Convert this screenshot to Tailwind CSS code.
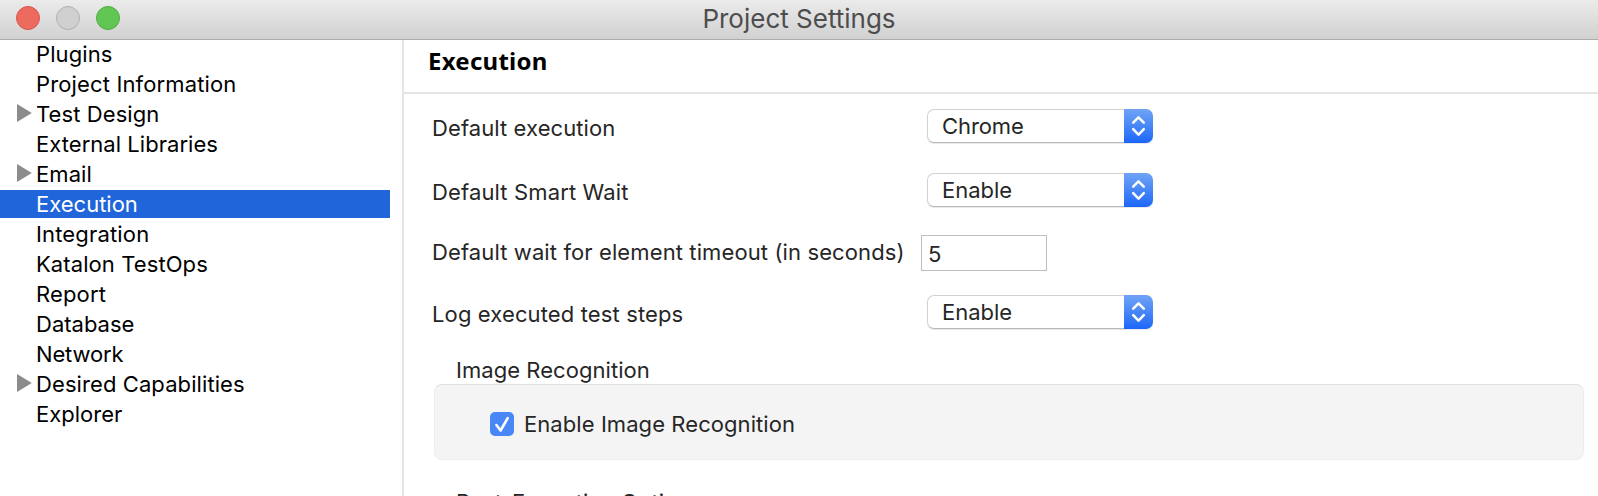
<!DOCTYPE html>
<html lang="en">
<head>
<meta charset="utf-8">
<title>Project Settings</title>
<script src="https://cdn.jsdelivr.net/npm/@tailwindcss/browser@4"></script>
</head>
<body class="h-[496px] w-[1598px] overflow-hidden bg-white font-['Inter',sans-serif] text-[22px] leading-7 tracking-[0.09px]">
<svg class="hidden">
  <symbol id="arrow" viewBox="0 0 15 18"><path d="M0 0L14.8 9L0 18Z" fill="#8c8c8c"/></symbol>
  <symbol id="updown" viewBox="0 0 29 34"><path d="M9.2 13.6L14.5 8.3L19.8 13.6M9.2 20.2L14.5 25.6L19.8 20.2" fill="none" stroke="#fff" stroke-width="2.5" stroke-linecap="round" stroke-linejoin="round"/></symbol>
</svg>
<div class="flex h-full flex-col">
  <header class="grid h-10 shrink-0 grid-cols-[1fr_auto_1fr] border-b border-[#adadad] bg-linear-to-b from-[#ebebeb] to-[#d1d1d1]">
    <div class="flex gap-4 pl-4 pt-1.5">
      <span class="size-6 rounded-full border border-[#dc5549] bg-[#ed6a5f]"></span>
      <span class="size-6 rounded-full border border-[#b0b0b0] bg-[#d0d0d0]"></span>
      <span class="size-6 rounded-full border border-[#51ab41] bg-[#62c655]"></span>
    </div>
    <h1 class="pt-[3px] text-[26px] leading-8 tracking-[0px] text-[#4d4d4d]">Project Settings</h1>
  </header>
  <div class="flex min-h-0 grow">
    <nav class="flex w-[402px] shrink-0 flex-col gap-0.5 pr-3 text-black">
      <div class="h-7 pl-9">Plugins</div>
      <div class="h-7 pl-9 tracking-[0.14px]">Project Information</div>
      <div class="flex h-7 pl-[17px]"><svg class="mr-1 mt-1 h-[18px] w-[15px]"><use href="#arrow"/></svg>Test Design</div>
      <div class="h-7 pl-9 tracking-[0.04px]">External Libraries</div>
      <div class="flex h-7 pl-[17px]"><svg class="mr-1 mt-1 h-[18px] w-[15px]"><use href="#arrow"/></svg>Email</div>
      <div class="h-7 bg-[#2065d9] pl-9 tracking-[0px] text-white">Execution</div>
      <div class="h-7 pl-9 tracking-[0.16px]">Integration</div>
      <div class="h-7 pl-9">Katalon TestOps</div>
      <div class="h-7 pl-9 tracking-[0.15px]">Report</div>
      <div class="h-7 pl-9 tracking-[0px]">Database</div>
      <div class="h-7 pl-9 tracking-[-0.15px]">Network</div>
      <div class="flex h-7 pl-[17px]"><svg class="mr-1 mt-1 h-[18px] w-[15px]"><use href="#arrow"/></svg>Desired Capabilities</div>
      <div class="h-7 pl-9 tracking-[0px]">Explorer</div>
    </nav>
    <main class="min-w-0 grow border-l-2 border-[#e5e5e5] text-[#262626]">
      <h2 class="h-[54px] border-b-2 border-[#e5e5e5] pl-6 pt-[5px] font-['Noto_Sans'] text-2xl leading-8 font-bold tracking-[0.25px] text-black">Execution</h2>
      <div class="flex h-16 pl-7 pt-[15px]">
        <div class="w-[495px] pt-[5px]">Default execution</div>
        <div class="flex h-[34px] w-[226px] rounded-[7px] shadow-[0_1px_1px_rgba(0,0,0,0.1)]">
          <span class="w-[197px] rounded-l-[7px] border border-r-0 border-[#d2d2d2] border-b-[#b9b9b9] pl-[14px] pt-[2px] tracking-[-0.1px]">Chrome</span>
          <span class="w-[29px] rounded-r-[7px] bg-linear-to-b from-[#70a3f5] to-[#1b66f8]"><svg class="size-full"><use href="#updown"/></svg></span>
        </div>
      </div>
      <div class="flex h-[62px] pl-7 pt-[15px]">
        <div class="w-[495px] pt-[5px] tracking-[0.14px]">Default Smart Wait</div>
        <div class="flex h-[34px] w-[226px] rounded-[7px] shadow-[0_1px_1px_rgba(0,0,0,0.1)]">
          <span class="w-[197px] rounded-l-[7px] border border-r-0 border-[#d2d2d2] border-b-[#b9b9b9] pl-[14px] pt-[2px] tracking-[0px]">Enable</span>
          <span class="w-[29px] rounded-r-[7px] bg-linear-to-b from-[#70a3f5] to-[#1b66f8]"><svg class="size-full"><use href="#updown"/></svg></span>
        </div>
      </div>
      <div class="flex h-[60px] pl-7 pt-[15px]">
        <div class="w-[489px] pt-[3px] tracking-[0.11px]">Default wait for element timeout (in seconds)</div>
        <div class="h-9 w-[126px] border border-[#bdbdbd] pl-1.5 pt-1">5</div>
      </div>
      <div class="flex h-[60px] pl-7 pt-[15px]">
        <div class="w-[495px] pt-[5px] tracking-[0.13px]">Log executed test steps</div>
        <div class="flex h-[34px] w-[226px] rounded-[7px] shadow-[0_1px_1px_rgba(0,0,0,0.1)]">
          <span class="w-[197px] rounded-l-[7px] border border-r-0 border-[#d2d2d2] border-b-[#b9b9b9] pl-[14px] pt-[2px] tracking-[0px]">Enable</span>
          <span class="w-[29px] rounded-r-[7px] bg-linear-to-b from-[#70a3f5] to-[#1b66f8]"><svg class="size-full"><use href="#updown"/></svg></span>
        </div>
      </div>
      <div class="h-11 pl-[52px] pt-4 tracking-[0.05px]">Image Recognition</div>
      <div class="ml-[30px] mr-[14px] flex h-[76px] rounded-lg border border-[#ededed] border-t-[#e0e0e0] bg-[#f4f4f4] pl-[55px] pt-[25px]">
        <svg class="mt-[2px] size-6" viewBox="0 0 24 24"><rect width="24" height="24" rx="5" fill="#4a87f6"/><path d="M6.4 13L10.6 18.5L17.7 6.2" fill="none" stroke="#fff" stroke-width="2.6" stroke-linecap="round" stroke-linejoin="round"/></svg>
        <span class="pl-[10px] tracking-[0.07px]">Enable Image Recognition</span>
      </div>
      <div class="pl-[52px] pt-7">Post-Execution Options</div>
    </main>
  </div>
</div>
</body>
</html>
